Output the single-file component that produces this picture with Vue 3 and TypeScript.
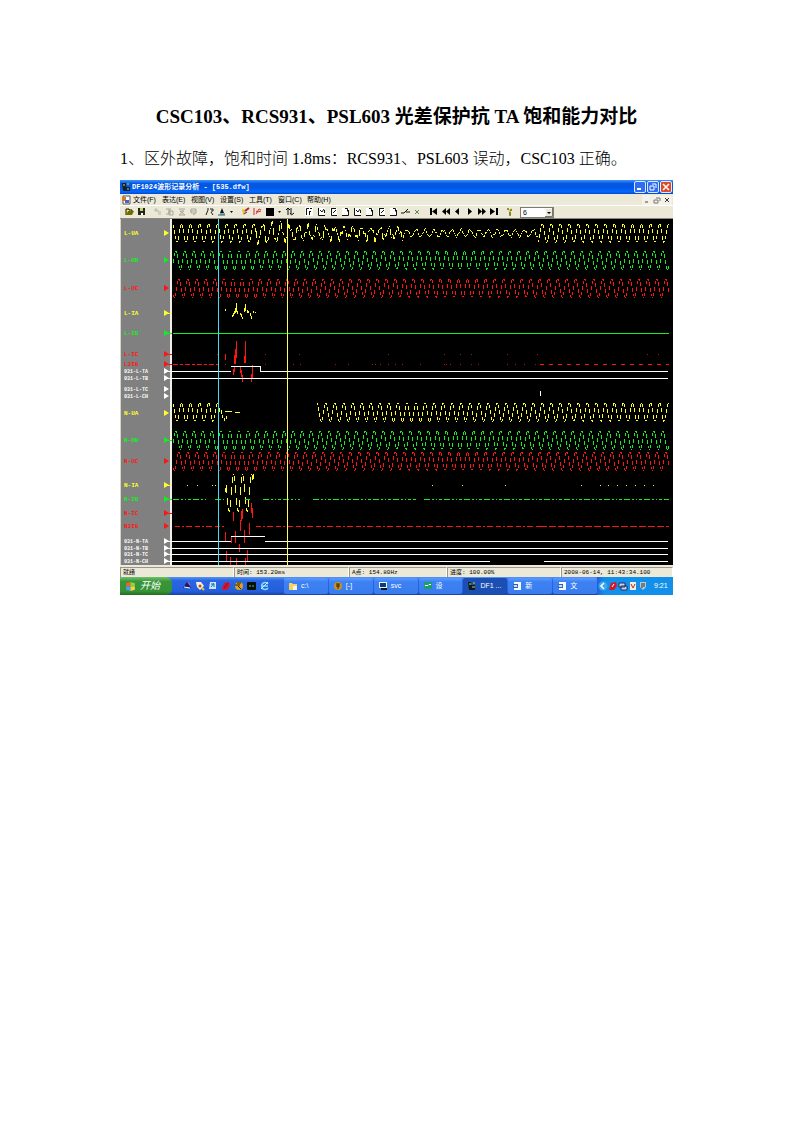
<script setup lang="ts">
interface Channel { name: string; y: number; color: string; small?: boolean; tail?: boolean }

const YELLOW = '#ffff28'
const GREEN = '#10f020'
const RED = '#ff1414'
const WHITE = '#ffffff'
const PERIOD = 9.02

const channels: Channel[] = [
  { name: 'L-UA', y: 14, color: YELLOW },
  { name: 'L-UB', y: 41, color: GREEN },
  { name: 'L-UC', y: 69, color: RED },
  { name: 'L-IA', y: 94, color: YELLOW, tail: true },
  { name: 'L-IB', y: 114, color: GREEN, tail: true },
  { name: 'L-IC', y: 135, color: RED, tail: true },
  { name: 'L3I0', y: 145, color: RED, tail: true },
  { name: '931-L-TA', y: 152, color: WHITE, small: true, tail: true },
  { name: '931-L-TB', y: 159, color: WHITE, small: true, tail: true },
  { name: '931-L-TC', y: 170, color: WHITE, small: true },
  { name: '931-L-CH', y: 177, color: WHITE, small: true },
  { name: 'N-UA', y: 194, color: YELLOW },
  { name: 'N-UB', y: 221, color: GREEN, tail: true },
  { name: 'N-UC', y: 242, color: RED },
  { name: 'N-IA', y: 266, color: YELLOW, tail: true },
  { name: 'N-IB', y: 280, color: GREEN, tail: true },
  { name: 'N-IC', y: 294, color: RED, tail: true },
  { name: 'N3I0', y: 307, color: RED },
  { name: '931-N-TA', y: 322, color: WHITE, small: true, tail: true },
  { name: '931-N-TB', y: 329, color: WHITE, small: true, tail: true },
  { name: '931-N-TC', y: 335, color: WHITE, small: true, tail: true },
  { name: '931-N-CH', y: 342, color: WHITE, small: true, tail: true },
]

// One vertical stroke per column, covering the part of the curve sampled in it.
function columns(from: number, to: number, f: (x: number) => number): string {
  let d = ''
  for (let x = from; x < to; x++) {
    const a = f(x)
    const b = f(x + 0.62)
    const top = Math.round(Math.min(a, b))
    const height = Math.max(1, Math.round(Math.abs(a - b)))
    d += `M${x + 0.5} ${top}v${height}`
  }
  return d
}

function sine(center: number, amp: number, peak: number): (x: number) => number {
  return (x) => center - amp * Math.cos(((x - peak) * 2 * Math.PI) / PERIOD)
}

function dots(y: number, xs: number[]): string {
  return xs.map((x) => `M${x} ${y}h1`).join('')
}

// Saturated voltage: the envelope shrinks while higher harmonics distort the shape.
function distorted(x: number): number {
  let amp = 9
  if (x > 165) amp = 6.5 - (x - 165) * 0.015
  if (x > 285) amp = 3.5
  const ripple = x < 285 ? 4 : 1.2
  return sine(14, amp, 61.3)(x) + ripple * Math.sin(x * 1.93) * Math.cos(x * 0.37)
}

const traces = [
  { color: YELLOW, d: columns(53, 136, sine(14, 9.5, 61.3)) + columns(136, 418, distorted) + columns(418, 549, sine(14, 9.5, 61.3)) },
  { color: GREEN, d: columns(53, 549, sine(41, 9.5, 64.7)) },
  { color: RED, d: columns(53, 549, sine(69, 9.5, 67.7)) },
  { color: YELLOW, d: columns(53, 100, sine(193, 9.5, 61.3)) + 'M101.5 191v4M102.5 196v3M104.5 199v3M106.5 197v3M105 192.5h7M115 193.5h5' + columns(197, 549, sine(193, 9.5, 61.3)) },
  { color: GREEN, d: columns(53, 549, sine(221, 9.5, 64.7)) },
  { color: RED, d: columns(53, 549, sine(242, 9.5, 67.7)) },
  { color: YELLOW, d: 'M105.5 90v2M112.5 96v2M113.5 94v3M114.5 92v3M115.5 89v5M116.5 84v9M117.5 92v3M120.5 94v2M121.5 95v3M122.5 98v2M124.5 89v4M125.5 85v7M127.5 91v3M128.5 92v2M130.5 94v3M131.5 97v3M133.5 92v2M135 93.5h1' },
  { color: RED, d: 'M105.5 135v6M113.5 150v6M114.5 148v5M114.5 136v9M115.5 130v15M116.5 122v17M120.5 147v7M121.5 151v7M122.5 156v7M124.5 137v7M125.5 122v22M131.5 155v8M132.5 146v13' },
  { color: YELLOW, d: columns(106, 133, sine(274, 19, 113.4)) + 'M105.5 269v4M133.5 255v5' + dots(266.5, [67, 77, 92, 95, 312, 342, 385, 461, 480, 488, 497, 506, 515, 524, 533]) },
  { color: RED, d: 'M105.5 313v9M111.5 317v7M113.5 293v9M115.5 312v12M120.5 301v11M121.5 292v10M122.5 290v10M124.5 311v13M129.5 304v12M131.5 284v10M132.5 289v10M106.5 332v10M110.5 338v8M116.5 339v7M119.5 325v8M125.5 339v7M127.5 331v11' },
  { color: '#b01212', d: dots(135.5, [97, 145, 179, 268, 324, 340, 351, 387, 417, 527, 538]) + dots(145.5, [105, 145, 173, 180, 215, 228, 252, 255, 260, 268, 275, 282, 300, 324, 326, 330, 340, 351, 358, 387, 395, 404, 415]) },
]

const toolGroups: string[][] = [
  ['open', 'save'],
  ['grayA', 'grayB', 'grayC', 'grayD'],
  ['link', 'pen', 'drop'],
  ['brush', 'chart', 'block', 'drop', 'swap'],
  ['page', 'z1', 'z2', 'z3', 'z1', 'z3', 'z2', 'z3', 'edge', 'cross'],
  ['first', 'rewind', 'prev', 'next', 'forward', 'last'],
  ['help'],
]

const icons: Record<string, string> = {
  open: '<path d="M1 8V2h3v1h3v2" fill="#ffe94a" stroke="#111"/><path d="M1 8l2-4h6L7 8z" fill="#716b00"/>',
  save: '<path d="M1 1h7v7H1z" fill="#222b12"/><path d="M3 1h3v3H3z" fill="#c8cf74"/><path d="M4 6h2v2H4z" fill="#fff"/>',
  grayA: '<path d="M1 3h4v2h3M3 1v4M5 7h3" fill="none" stroke="#bbb8aa"/>',
  grayB: '<path d="M1 2h3v5H1M5 1v6M4 4h4v4H4z" fill="none" stroke="#aaa79a"/>',
  grayC: '<path d="M2 2h6M2 8h6L3 4h4z" fill="none" stroke="#aaa79a"/>',
  grayD: '<path d="M2 2h5v4H2zM1 4h6M4 8l3-2" fill="none" stroke="#aaa79a"/>',
  link: '<path d="M1 8l2-5M3 1v2M5 2h3v2H6M6 5l2 3" fill="none" stroke="#222"/>',
  pen: '<path d="M3 6l2-5 2 5z" fill="#111"/><path d="M1 8h7M3 7h5" stroke="#16688b"/>',
  drop: '<path d="M3 4h3L4.500 6z" fill="#111"/>',
  brush: '<path d="M1 2l3 1 1 3-3 2z" fill="#efbd21"/><path d="M4 4l4-3" stroke="#b42a21" stroke-width="2"/><path d="M3 7l3-2" stroke="#213bb4"/>',
  chart: '<path d="M1 1v7M3 7l3-5 2 1M3 4l2 1 3-1" fill="none" stroke="#d12b2b"/>',
  block: '<path d="M1 1h8v8H1z" fill="#000"/>',
  swap: '<path d="M3 8V2M1 3l2-2 2 2M6 1v6M5 6l1.500 2L9 6" fill="none" stroke="#111"/>',
  page: '<path d="M0 0h8v9H0z" fill="#fff"/><path d="M1.500 8V1.500H4M5 1.500h2M4.500 4v4M4 4.500h2" fill="none" stroke="#111"/>',
  z1: '<path d="M1 1h7v8H1z" fill="#fff"/><path d="M1.500 1v7.500H8M3 3l2 2 2-3M7.500 3v3" fill="none" stroke="#111"/>',
  z2: '<path d="M1 1h7v8H1z" fill="#fff"/><path d="M2.500 1v7.500H8M3 1.500h4M7 3L4 6" fill="none" stroke="#111"/>',
  z3: '<path d="M1 1h7v8H1z" fill="#fff"/><path d="M1 8.500h6.500V3M4 1.500h2.500v3" fill="none" stroke="#111"/>',
  edge: '<path d="M0 6h3l4-4M5 5h4" fill="none" stroke="#111"/>',
  cross: '<path d="M2 3l4 4M6 3L2 7" stroke="#57864e"/>',
  first: '<path d="M1 1h2v7H1zM8 1v7L3 4.500z" fill="#000"/>',
  rewind: '<path d="M5 1v7L1 4.500zM9 1v7L5 4.500z" fill="#000"/>',
  prev: '<path d="M6 1v7L2 4.500z" fill="#000"/>',
  next: '<path d="M3 1v7l4-3.500z" fill="#000"/>',
  forward: '<path d="M1 1v7l4-3.500zM5 1v7l4-3.500z" fill="#000"/>',
  last: '<path d="M1 1v7l5-3.500zM7 1h2v7H7z" fill="#000"/>',
  help: '<path d="M2 1l2 2 3-2-1 4v3H4V5z" fill="#dfd01b"/><path d="M2 2h2M5 3h2M4 6h2M4 8h2" stroke="#333"/>',
}

const menus = ['文件(F)', '表达(E)', '视图(V)', '设置(S)', '工具(T)', '窗口(C)', '帮助(H)']

const quick = [
  { name: 'Bird', svg: '<path d="M1 7l4-6 4 6z" fill="#1c1670"/><path d="M2 6l6 1" stroke="#fff"/><path d="M6 1l2 3" stroke="#e8607a"/>' },
  { name: 'Mail', svg: '<path d="M1 1h5l3 4-4 4-3-3z" fill="#f2f0dc"/><circle cx="5" cy="5" r="1.500" fill="#c9451d"/><path d="M7 7l2 2" stroke="#e8c53a" stroke-width="2"/>' },
  { name: 'Desktop', svg: '<path d="M2 1h6v7H1z" fill="#c9e9fb"/><path d="M3 6l3-4M3 3h3v3" fill="none" stroke="#1a6ac0"/>' },
  { name: 'Player', svg: '<path d="M3 2l5-1 1 4-3 4H1l1-4z" fill="#d3172b"/><path d="M3 7l4-5" stroke="#7d0f32"/>' },
  { name: 'Viewer', svg: '<circle cx="5" cy="5" r="4" fill="#d8a21e"/><path d="M1 4h5M4 5l3 3M3 2h4" stroke="#2e2207"/>' },
  { name: 'Console', svg: '<rect x="0" y="1" width="9" height="8" rx="1" fill="#071007"/><path d="M2 5h2M5 5h2" stroke="#4fd35a"/>' },
  { name: 'Browser', svg: '<path d="M8 7a3.500 3.500 0 1 1 0-4M2 5h6" fill="none" stroke="#7fdcff" stroke-width="1.500"/><path d="M1 8L8 1" stroke="#cdeeff"/>' },
]

const tasks = [
  { text: 'c:\\', svg: '<path d="M1 2h3l1 1h4v6H1z" fill="#f7d35c"/><path d="M5 5h4v4H5z" fill="#f5f5f5"/>' },
  { text: '[-]', svg: '<circle cx="5" cy="5" r="4" fill="#c79422"/><path d="M3 3h4M3 5h4M5 3v5" stroke="#35270a"/>' },
  { text: 'svc', svg: '<path d="M1 1h8v6H1z" fill="#e6f3fb"/><path d="M2 2h6v4H2z" fill="#123a76"/><path d="M3 8h6" stroke="#111" stroke-width="2"/>' },
  { text: '设', svg: '<path d="M1 1h8v7H1z" fill="#1f9c6d"/><path d="M2 4.500h3l1-1h2" fill="none" stroke="#fff"/>' },
  { text: 'DF1 ...', active: true, svg: '<path d="M1 1h3v3h4v5H2z" fill="#10191c"/><path d="M2 3h2M5 6h3M6 2h2" stroke="#c9d13f"/>' },
  { text: '新', svg: '<path d="M2 1h7v8H2z" fill="#f4f8ff"/><path d="M1 3h5v4H1z" fill="#305fb4"/><path d="M2 4l1 2 1-2 1 2" fill="none" stroke="#fff"/>' },
  { text: '文', svg: '<path d="M2 1h7v8H2z" fill="#f4f8ff"/><path d="M1 3h5v4H1z" fill="#305fb4"/><path d="M2 4l1 2 1-2 1 2" fill="none" stroke="#fff"/>' },
]

const tray = [
  '<circle cx="5" cy="5" r="4.500" fill="#37a8f0"/><path d="M6 2L3 5l3 3" fill="none" stroke="#fff" stroke-width="1.500"/>',
  '<path d="M3 2l5-1 1 4-3 4H1l1-4z" fill="#d3172b"/><path d="M4 6l2-3" stroke="#fff"/>',
  '<path d="M1 2h6v4H1zM3 5h6v4H3z" fill="#c8d4e8" stroke="#1c2f62"/>',
  '<path d="M2 1h6v8H2z" fill="#f0eee5"/><path d="M3 3l2 4 2-4" fill="none" stroke="#c32a1c"/>',
  '<path d="M2 1h6v5L5 9 2 6z" fill="#b9cbd2"/><path d="M4 2v5M6 2v4" stroke="#27323c"/>',
]
</script>

<template>
  <main class="page">
    <h1 class="title">CSC103、RCS931、PSL603 光差保护抗 TA 饱和能力对比</h1>
    <p class="lead">1、区外故障，饱和时间 1.8ms：RCS931、PSL603 误动，CSC103 正确。</p>

    <section class="window" aria-label="DF1024">
      <header class="titlebar">
        <svg class="ico" viewBox="0 0 10 10"><path d="M1 1h4v4h4v4H2z" fill="#10202c" /><path d="M2 3h2M6 7h2M6 2h2" stroke="#c9e24a" /></svg>
        <span class="caption">DF1024波形记录分析 - [535.dfw]</span>
        <button class="win" aria-label="Minimize"><svg viewBox="0 0 10 10"><path d="M2 7h4" stroke="#fff" stroke-width="2" /></svg></button>
        <button class="win" aria-label="Restore"><svg viewBox="0 0 10 10"><path d="M4 2h4v4M2 4h4v4H2z" fill="none" stroke="#fff" /></svg></button>
        <button class="win close" aria-label="Close"><svg viewBox="0 0 10 10"><path d="M2 2l6 6M8 2L2 8" stroke="#fff" stroke-width="1.500" /></svg></button>
      </header>

      <nav class="menubar">
        <svg class="ico" viewBox="0 0 10 10"><path d="M2 1h7v8H2z" fill="#fff" stroke="#555" /><path d="M1 2h4v4H1z" fill="#e0762a" /><path d="M4 5h4v3H4z" fill="#3e65c8" /></svg>
        <button v-for="m in menus" :key="m" class="menu">{{ m }}</button>
        <span class="grow"></span>
        <button class="mdi" aria-label="Minimize document"><svg viewBox="0 0 10 10"><path d="M3 7h3" stroke="#444" /></svg></button>
        <button class="mdi" aria-label="Restore document"><svg viewBox="0 0 10 10"><path d="M4 3h4v3M2 5h4v3H2z" fill="none" stroke="#777" /></svg></button>
        <button class="mdi" aria-label="Close document"><svg viewBox="0 0 10 10"><path d="M3 3l4 4M7 3L3 7" stroke="#333" /></svg></button>
      </nav>

      <div class="toolbar">
        <div v-for="(g, gi) in toolGroups" :key="gi" class="group">
          <button v-for="(t, ti) in g" :key="ti" class="tool" :class="{ narrow: t === 'drop' }" :aria-label="t">
            <svg viewBox="0 0 10 10" v-html="icons[t]"></svg>
          </button>
        </div>
        <div class="pick">
          <select class="count" aria-label="Channels"><option>6</option></select>
          <svg class="arrow" viewBox="0 0 8 9"><path d="M0 0h8v9H0z" fill="#ece9d8" /><path d="M.5 9V.5H8" fill="none" stroke="#fff" /><path d="M7.500 0v8.500H0" fill="none" stroke="#777" /><path d="M2 4h4L4 6z" fill="#000" /></svg>
        </div>
      </div>

      <svg class="plot" viewBox="0 0 553 346" role="img" aria-label="Waveforms">
        <rect width="553" height="346" fill="#000" />
        <rect width="51" height="346" fill="#808080" />
        <rect width="1" height="346" fill="#d8d5c8" />
        <rect x="50" width="2" height="346" fill="#f2f0e6" />
        <g v-for="c in channels" :key="c.name" :fill="c.color">
          <text x="4" :y="c.y + 2" :class="c.small ? 'tag small' : 'tag'">{{ c.name }}</text>
          <path :d="`M44 ${c.y - 3}v6l5 -3z`" />
          <path v-if="c.tail" :d="`M46 ${c.y}h6v1h-6z`" />
        </g>
        <g class="lines">
          <path v-for="(t, i) in traces" :key="i" :d="t.d" :stroke="t.color" />
          <path d="M53 114.500H549" :stroke="GREEN" />
          <path d="M53 145.500H98" :stroke="RED" stroke-dasharray="5 2 3 2" />
          <path d="M420 145.500H549" :stroke="RED" stroke-dasharray="4 5" />
          <path d="M53 280.500H86M95 280.500H104M125 280.500H130M143 280.500H180M193 280.500H296M304 280.500H549" :stroke="GREEN" stroke-dasharray="6 2 2 2 1 2 3 2" />
          <path d="M55 307.500H105M136 307.500H420" :stroke="RED" stroke-dasharray="5 2 2 2 6 3" />
          <path d="M420 307.500H549" :stroke="RED" stroke-dasharray="7 2" />
          <path d="M52 152.500H111M111 147.500H140.500V152.500H548M52 159.500H548M420.500 172v5M52 322.500H111M111 317.500H145M145 322.500H548M52 329.500H548M52 335.500H548M52 342.500H370M424 342.500H548" :stroke="WHITE" />
          <path d="M98.500 0V346" stroke="#3ce0f0" />
          <path d="M167.500 0V346" stroke="#ffff50" />
        </g>
      </svg>

      <footer class="status">
        <span>就绪</span><span>时间: 153.20ms</span><span>A点: 154.80Hz</span><span>进度: 100.00%</span><span>2008-06-14, 11:43:34.100</span>
      </footer>

      <div class="taskbar">
        <button class="start">
          <svg viewBox="0 0 10 10"><path d="M1 2l4-1v4H1z" fill="#f2602b" /><path d="M5 1l4 1v3H5z" fill="#8ed43a" /><path d="M1 5h4v4L1 8z" fill="#4f9cf5" /><path d="M5 5h4v3L5 9z" fill="#fbd13d" /></svg>
          <span>开始</span>
        </button>
        <div class="quick">
          <button v-for="q in quick" :key="q.name" :aria-label="q.name"><svg viewBox="0 0 10 10" v-html="q.svg"></svg></button>
        </div>
        <div class="tasks">
          <button v-for="t in tasks" :key="t.text" class="task" :class="{ active: t.active }">
            <svg viewBox="0 0 10 10" v-html="t.svg"></svg><span>{{ t.text }}</span>
          </button>
        </div>
        <div class="tray">
          <svg v-for="(s, i) in tray" :key="i" viewBox="0 0 10 10" v-html="s"></svg>
          <span>9:21</span>
        </div>
      </div>
    </section>
  </main>
</template>

<style>
body { background: #fff; }
</style>

<style scoped>
.page {
  padding: 102px 120px 40px;
  font-family: "Liberation Serif", "Noto Sans CJK SC", serif;
  color: #000;
}
.title { margin: 0; text-align: center; font-size: 19px; line-height: 30px; font-weight: 700; white-space: nowrap; }
.lead { margin: 15px 0 9px; font-size: 16px; line-height: 24px; font-weight: 300; white-space: nowrap; }
.window { font-family: "Liberation Sans", "Noto Sans CJK SC", sans-serif; font-size: 7px; line-height: 10px; }
button { margin: 0; padding: 0; border: 0; background: none; font: inherit; color: inherit; }
svg { display: block; flex: none; }
.ico { width: 10px; height: 10px; }
.titlebar {
  display: flex; align-items: center; height: 14px; padding: 0 1px; gap: 1px;
  background: linear-gradient(#3d95ff 0, #0558e0 25%, #0455e0 50%, #0268fe 85%, #0345c8 100%);
  color: #fff;
}
.caption { flex: 1; font: 700 7px/12px "Liberation Mono", "Noto Sans CJK SC", monospace; white-space: nowrap; }
.win { width: 12px; height: 12px; border: 1px solid #dfe9ff; border-radius: 2px; background: #2f6cf0; }
.win.close { background: #dd4a25; }
.win svg { width: 10px; height: 10px; }
.menubar { display: flex; align-items: center; height: 11px; padding: 0 1px; background: #ece9d8; color: #000; }
.menubar .ico { margin-right: 2px; }
.menu { width: 29px; text-align: left; white-space: nowrap; }
.grow { flex: 1; }
.mdi { width: 10px; height: 10px; background: #f4f2e8; }
.mdi svg { width: 10px; height: 10px; }
.toolbar {
  display: flex; align-items: center; height: 14px; gap: 4px; padding: 0 4px;
  box-sizing: border-box; background: #ece9d8; border-top: 1px solid #fff; border-bottom: 1px solid #8c8a7e;
}
.group { display: flex; }
.group:nth-child(5) { margin-left: 4px; }
.tool { width: 12px; height: 10px; display: flex; justify-content: center; }
.tool.narrow { width: 8px; }
.tool svg { width: 10px; height: 10px; }
.pick { position: relative; width: 34px; height: 11px; }
.count {
  display: block; width: 100%; height: 11px; padding: 0 2px; border: 1px solid #7f7d72; border-radius: 0;
  appearance: none; background: #fff; color: #000; font: 7px/9px "Liberation Sans", sans-serif;
}
.arrow { position: absolute; right: 1px; top: 1px; width: 8px; height: 9px; pointer-events: none; }
.plot { width: 100%; height: auto; }
.lines { fill: none; stroke-width: 1; shape-rendering: crispEdges; }
.tag { font: 700 6px "Liberation Mono", monospace; }
.tag.small { font-size: 5px; }
.status {
  display: grid; grid-template-columns: 114fr 115fr 98fr 114fr 112fr; height: 12px;
  box-sizing: border-box; padding-top: 2px; background: #ece9d8; color: #000;
  font: 6px/9px "Liberation Mono", "Noto Sans CJK SC", monospace;
}
.status span { border-top: 1px solid #9a978a; border-left: 1px solid #9a978a; border-right: 1px solid #fff; padding-left: 2px; white-space: nowrap; overflow: hidden; }
.taskbar {
  display: flex; align-items: stretch; height: 18px; color: #fff;
  background: linear-gradient(#5594f5 0, #2a66e2 20%, #245edb 80%, #1941a5 100%);
}
.start {
  display: flex; align-items: center; gap: 4px; width: 52px; padding-left: 5px; box-sizing: border-box;
  border-radius: 0 6px 6px 0; background: linear-gradient(#6fc06a 0, #3a953a 25%, #359235 80%, #226c22 100%);
  font-size: 10px; font-style: italic; line-height: 14px;
}
.start svg { width: 11px; height: 11px; }
.quick { display: flex; align-items: center; gap: 2px; width: 112px; padding: 0 10px; box-sizing: border-box; }
.quick svg { width: 10px; height: 10px; }
.quick button { width: 11px; }
.tasks { display: flex; flex: 1; gap: 1px; padding: 1px 0; }
.task {
  display: flex; flex: 1; align-items: center; gap: 3px; padding-left: 4px; overflow: hidden; white-space: nowrap;
  border-radius: 2px; background: linear-gradient(#5c9bff 0, #3c81f3 25%, #3a7cee 100%);
}
.task.active { background: #1c4fb4; }
.task svg { width: 10px; height: 10px; }
.tray {
  display: flex; align-items: center; width: 76px; box-sizing: border-box; padding-left: 1px;
  background: linear-gradient(90deg, #245edb 0, #1290e9 10%, #1290e9 100%);
}
.tray svg { width: 10px; height: 10px; }
.tray span { margin-left: 6px; }
</style>
